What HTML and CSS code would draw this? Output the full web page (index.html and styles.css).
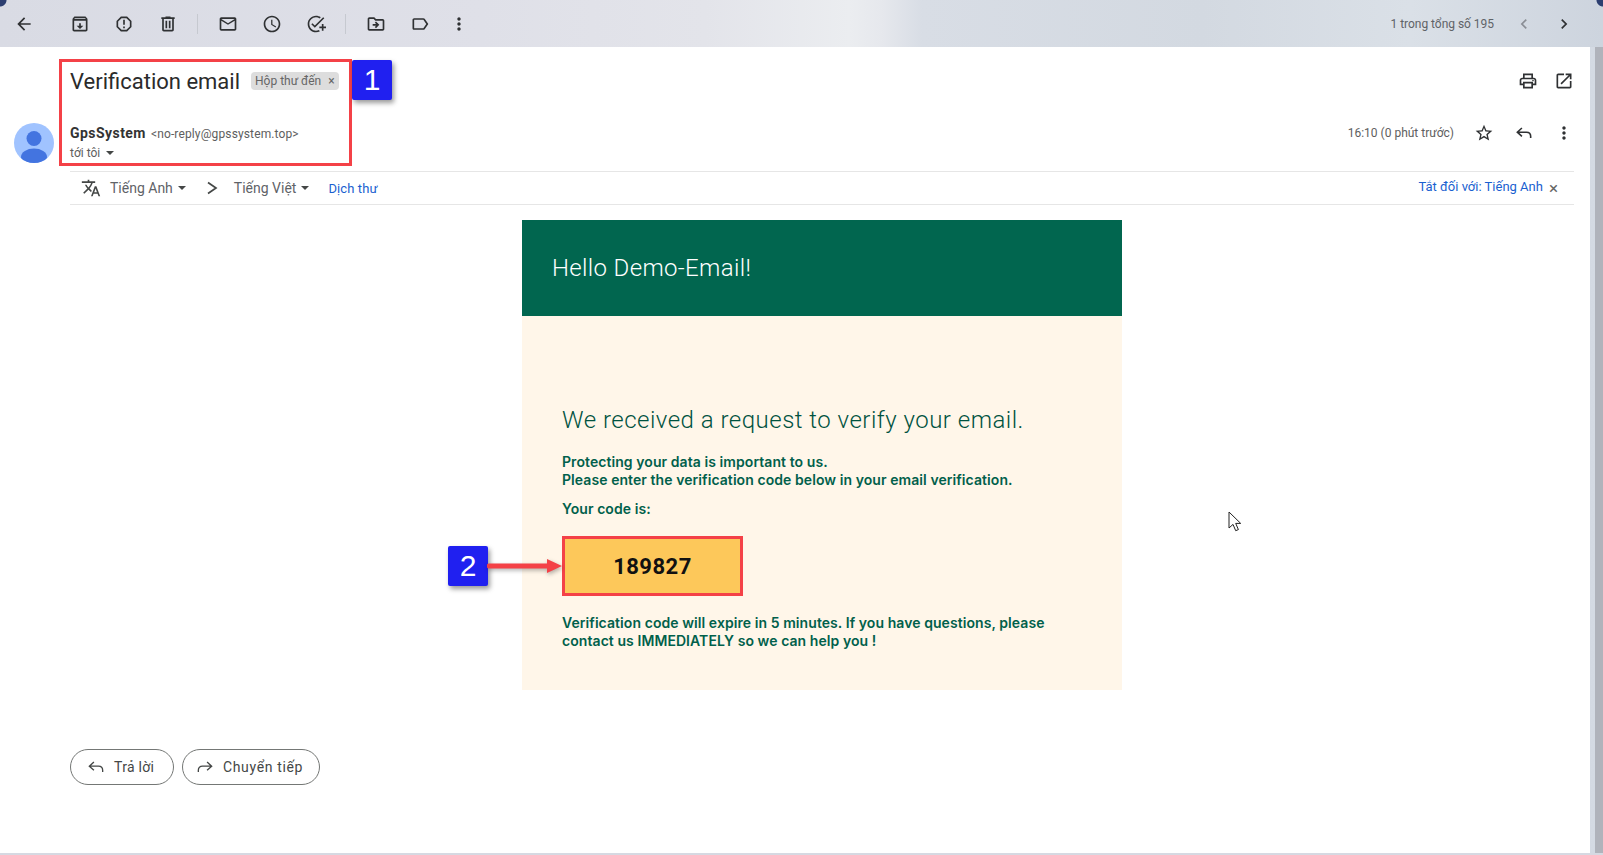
FILE: index.html
```html
<!DOCTYPE html>
<html lang="vi">
<head>
<meta charset="utf-8">
<title>Verification email</title>
<link rel="stylesheet" href="styles.css">
</head>
<body>
<div class="app">
  <header class="toolbar">
    <div class="tools">
      <svg class="ico back" viewBox="0 0 24 24"><path d="M20 11H7.83l5.59-5.59L12 4l-8 8 8 8 1.41-1.41L7.83 13H20v-2z"/></svg>
      <svg class="ico" viewBox="0 0 24 24"><path d="M20.5 5.2l-1.4-1.6c-.3-.4-.7-.6-1.1-.6H6c-.5 0-.9.2-1.2.6L3.5 5.2c-.3.4-.5.8-.5 1.3V19c0 1.1.9 2 2 2h14c1.100 0 2-.9 2-2V6.500c0-.5-.2-.9-.5-1.300zM19 19H5V8h14v11zM6 5h12l1 1H5l1-1z"/><path d="M12 18l-4-4h3v-3h2v3h3z"/></svg>
      <svg class="ico" viewBox="0 0 24 24"><path d="M15.73 3H8.27L3 8.27v7.46L8.27 21h7.46L21 15.73V8.27L15.73 3zM19 14.9L14.9 19H9.1L5 14.9V9.1L9.1 5h5.8L19 9.1v5.8z"/><path d="M11 7h2v6h-2zM11 15h2v2h-2z"/></svg>
      <svg class="ico" viewBox="0 0 24 24"><path d="M15 4V3H9v1H4v2h1v13c0 1.100.9 2 2 2h10c1.100 0 2-.9 2-2V6h1V4h-5zm2 15H7V6h10v13z"/><path d="M9 8h2v9H9zm4 0h2v9h-2z"/></svg>
      <span class="sep"></span>
      <svg class="ico" viewBox="0 0 24 24"><path d="M20 4H4c-1.100 0-2 .9-2 2v12c0 1.100.9 2 2 2h16c1.100 0 2-.9 2-2V6c0-1.100-.9-2-2-2zm0 14H4V8l8 5 8-5v10zm-8-7L4 6h16l-8 5z"/></svg>
      <svg class="ico" viewBox="0 0 24 24"><path d="M11.990 2C6.470 2 2 6.480 2 12s4.470 10 9.990 10C17.520 22 22 17.520 22 12S17.520 2 11.990 2zM12 20c-4.420 0-8-3.580-8-8s3.580-8 8-8 8 3.580 8 8-3.580 8-8 8z"/><path d="M12.500 7H11v6l5.250 3.150.75-1.230-4.500-2.670z"/></svg>
      <svg class="ico" viewBox="0 0 24 24"><path d="M22 5.180L10.590 16.600l-4.240-4.240 1.410-1.410 2.830 2.830 10-10L22 5.180z"/><path d="M12 20c-4.410 0-8-3.590-8-8s3.590-8 8-8c1.570 0 3.040.46 4.280 1.250l1.450-1.450C16.100 2.670 14.130 2 12 2 6.480 2 2 6.480 2 12s4.480 10 10 10c1.730 0 3.360-.44 4.780-1.220l-1.500-1.500c-1 .46-2.110.72-3.280.72z"/><path d="M19 15h-3v2h3v3h2v-3h3v-2h-3v-3h-2v3z"/></svg>
      <span class="sep"></span>
      <svg class="ico" viewBox="0 0 24 24"><path d="M20 6h-8l-2-2H4c-1.100 0-2 .9-2 2v12c0 1.100.9 2 2 2h16c1.100 0 2-.9 2-2V8c0-1.100-.9-2-2-2zm0 12H4V6h5.170l2 2H20v10z"/><path d="M12.160 12H8v2h4.160l-1.590 1.590L12 17l4-4-4-4-1.410 1.410z"/></svg>
      <svg class="ico" viewBox="0 0 24 24"><path d="M17.630 5.840C17.270 5.330 16.670 5 16 5L5 5.010C3.900 5.010 3 5.900 3 7v10c0 1.100.9 1.990 2 1.990L16 19c.67 0 1.270-.33 1.630-.84L22 12l-4.370-6.160zM16 17H5V7h11l3.550 5L16 17z"/></svg>
      <svg class="ico narrow" viewBox="0 0 24 24"><path d="M12 8c1.100 0 2-.9 2-2s-.9-2-2-2-2 .9-2 2 .9 2 2 2zm0 2c-1.100 0-2 .9-2 2s.9 2 2 2 2-.9 2-2-.9-2-2-2zm0 6c-1.100 0-2 .9-2 2s.9 2 2 2 2-.9 2-2-.9-2-2-2z"/></svg>
    </div>
    <div class="pager">
      <span class="count">1 trong tổng số 195</span>
      <svg class="ico dim" viewBox="0 0 24 24"><path d="M15.410 7.410L14 6l-6 6 6 6 1.410-1.410L10.830 12z"/></svg>
      <svg class="ico" viewBox="0 0 24 24"><path d="M10 6L8.590 7.410 13.170 12l-4.580 4.590L10 18l6-6z"/></svg>
    </div>
  </header>

  <div class="main">
    <main class="panel">
      <div class="subject">
        <h1 class="title">Verification email</h1>
        <span class="chip">Hộp thư đến <span class="chip-x">×</span></span>
        <div class="subject-actions">
          <svg class="ico" viewBox="0 0 24 24"><path d="M19 8h-1V3H6v5H5c-1.660 0-3 1.340-3 3v6h4v4h12v-4h4v-6c0-1.660-1.340-3-3-3zM8 5h8v3H8V5zm8 14H8v-4h8v4zm2-4v-2H6v2H4v-4c0-.55.45-1 1-1h14c.55 0 1 .45 1 1v4h-2z"/><circle cx="18" cy="11.500" r="1"/></svg>
          <svg class="ico" viewBox="0 0 24 24"><path d="M19 19H5V5h7V3H5c-1.110 0-2 .9-2 2v14c0 1.100.89 2 2 2h14c1.100 0 2-.9 2-2v-7h-2v7zM14 3v2h3.590l-9.830 9.830 1.410 1.410L19 6.410V10h2V3h-7z"/></svg>
        </div>
      </div>

      <div class="msg-head">
        <svg class="avatar" viewBox="0 0 40 40"><defs><clipPath id="av"><circle cx="20" cy="20" r="20"/></clipPath></defs><circle cx="20" cy="20" r="20" fill="#a0c3ff"/><g clip-path="url(#av)" fill="#4374e0"><circle cx="20" cy="15.500" r="7.500"/><ellipse cx="20" cy="34" rx="13" ry="8.500"/></g></svg>
        <div class="sender">
          <div class="from"><span class="name">GpsSystem</span> <span class="addr">&lt;no-reply@gpssystem.top&gt;</span></div>
          <div class="to">tới tôi <span class="caret small"></span></div>
        </div>
        <div class="msg-actions">
          <span class="time">16:10 (0 phút trước)</span>
          <svg class="ico" viewBox="0 0 24 24"><path d="M22 9.240l-7.190-.62L12 2 9.190 8.630 2 9.240l5.460 4.730L5.820 21 12 17.270 18.180 21l-1.630-7.030L22 9.240zM12 15.400l-3.760 2.270 1-4.280-3.320-2.880 4.380-.38L12 6.100l1.710 4.040 4.380.38-3.320 2.880 1 4.280L12 15.400z"/></svg>
          <svg class="ico stroke" viewBox="0 0 24 24"><path d="M9.500 6L4 11l5.500 5M4.500 11H15c3 0 5 2 5 5v2"/></svg>
          <svg class="ico" viewBox="0 0 24 24"><path d="M12 8c1.100 0 2-.9 2-2s-.9-2-2-2-2 .9-2 2 .9 2 2 2zm0 2c-1.100 0-2 .9-2 2s.9 2 2 2 2-.9 2-2-.9-2-2-2zm0 6c-1.100 0-2 .9-2 2s.9 2 2 2 2-.9 2-2-.9-2-2-2z"/></svg>
        </div>
      </div>

      <div class="content">
        <div class="translate">
          <svg class="ico tr-ico" viewBox="0 0 24 24"><path d="M12.870 15.070l-2.540-2.510.03-.03c1.740-1.940 2.980-4.170 3.710-6.530H17V4h-7V2H8v2H1v1.990h11.170C11.500 7.920 10.440 9.750 9 11.350 8.070 10.320 7.300 9.190 6.690 8h-2c.73 1.630 1.730 3.170 2.980 4.560l-5.090 5.020L4 19l5-5 3.110 3.110.76-2.040zM18.500 10h-2L12 22h2l1.120-3h4.750L21 22h2l-4.500-12zm-2.620 7l1.620-4.330L19.120 17h-3.240z"/></svg>
          <span class="lang">Tiếng Anh</span><span class="caret"></span>
          <svg class="chev" viewBox="0 0 24 24"><path d="M8 6.500l8 5.500-8 5.500"/></svg>
          <span class="lang">Tiếng Việt</span><span class="caret"></span>
          <a class="link doc">Dịch thư</a>
          <a class="link off">Tắt đối với: Tiếng Anh</a>
          <span class="off-x">×</span>
        </div>

        <article class="card">
          <div class="card-head">Hello Demo-Email!</div>
          <div class="card-body">
            <h2 class="lead">We received a request to verify your email.</h2>
            <p class="txt first">Protecting your data is important to us.<br>Please enter the verification code below in your email verification.</p>
            <p class="txt code-label">Your code is:</p>
            <div class="code">189827</div>
            <p class="txt">Verification code will expire in 5 minutes. If you have questions, please contact us IMMEDIATELY so we can help you !</p>
          </div>
        </article>

        <div class="actions">
          <button class="pill pill-reply"><svg class="ico stroke thin" viewBox="0 0 24 24"><path d="M9.500 6L4 11l5.500 5M4.500 11H15c3 0 5 2 5 5v2"/></svg>Trả lời</button>
          <button class="pill pill-forward"><svg class="ico stroke thin" viewBox="0 0 24 24"><path d="M14.500 6L20 11l-5.500 5M19.500 11H9c-3 0-5 2-5 5v2"/></svg>Chuyển tiếp</button>
        </div>
      </div>
    </main>
    <div class="rail"><div class="thumb"></div></div>
  </div>
</div>

<div class="mark mark-box"></div>
<div class="mark badge badge-one">1</div>
<div class="mark badge badge-two">2</div>
<svg class="mark arrow" viewBox="0 0 76 20"><path d="M2 7.500h58V3l15 7-15 7v-4.500H2c-3.300 0-3.300-5 0-5z" fill="#f44147"/></svg>
<svg class="mark cursor" viewBox="0 0 14 22"><path d="M1 1v16l4-3.600 2.700 6.300 2.700-1.100-2.700-6.200h5z" fill="#fff" stroke="#222" stroke-width="1"/></svg>
</body>
</html>
```
FILE: styles.css
```css
* { box-sizing: border-box; }
html, body { margin: 0; height: 100%; overflow: hidden; }
body {
  font-family: Roboto, "Liberation Sans", sans-serif;
  color: #202124;
  background: #d6d9e2;
  position: relative;
}
.app {
  height: 853px;
  display: flex;
  flex-direction: column;
  background: linear-gradient(90deg, #dcdee8 0%, #e0e1e9 40%, #dadfe8 55%, #cfd6e0 62%, #d9dfe8 80%, #d4dae3 100%);
}
.toolbar {
  height: 47px;
  flex: none;
  display: flex;
  align-items: center;
  justify-content: space-between;
  background:
    radial-gradient(circle at 0 0, #2c3e70 6px, transparent 7px),
    radial-gradient(circle at 1603px 0, #2c3e70 6px, transparent 7px),
    linear-gradient(90deg, #d9dbe4 0%, #dfe0e8 30%, #e3e4ea 44%, #ebedf0 53%, #e6e8ed 55%, #d8dde5 57.500%, #d3d9e1 75%, #dae0e7 88%, #cdd4de 100%);
}
.tools { display: flex; align-items: center; padding-left: 12px; }
.ico { width: 20px; height: 20px; fill: #2f3133; flex: none; display: block; }
.ico.stroke { fill: none; stroke: #2f3133; stroke-width: 1.900; }
.ico.stroke.thin { stroke: #444746; stroke-width: 1.600; }
.tools .ico { margin-right: 24px; margin-left: 0; }
.tools .back { margin-left: 2px; margin-right: 36px; width: 20px; }
.sep { width: 1px; height: 20px; background: #c6c9d0; margin: 0 20px 0 -5px; }
.tools .ico.narrow { margin-right: 0; margin-left: -5px; }
.pager { display: flex; align-items: center; padding-right: 29px; }
.count { font-size: 12px; color: #5f6368; margin-right: 20px; letter-spacing: -.03px; }
.pager .ico + .ico { margin-left: 20px; }
.ico.dim { fill: #8a8e95; }

.main { flex: 1; display: flex; min-height: 0; }
.panel { width: 1590px; flex: none; background: #fff; }
.rail { flex: 1; display: flex; justify-content: flex-end; }
.thumb { width: 8px; height: 100%; background: #b0b3bb; }

.subject {
  height: 68px;
  display: flex;
  align-items: center;
  padding: 0 16px 0 70px;
}
.title { font-size: 22px; font-weight: 400; margin: 0; color: #2b2b2b; }
.chip {
  margin-left: 11px;
  height: 18px;
  padding: 0 4px;
  background: #dddddd;
  border-radius: 4px;
  font-size: 12px;
  line-height: 18px;
  color: #666;
}
.chip-x { margin-left: 4px; }
.subject-actions { margin-left: auto; display: flex; gap: 16px; }

.msg-head {
  margin-top: 8px;
  height: 48px;
  display: flex;
  padding: 0 16px 0 14px;
  align-items: flex-start;
}
.avatar { width: 40px; height: 40px; flex: none; margin-right: 16px; }
.sender { padding-top: 2px; }
.from { line-height: 17px; display: flex; align-items: baseline; gap: 5px; }
.name { font-size: 14px; font-weight: 700; color: #333; letter-spacing: .45px; }
.addr { font-size: 12px; color: #5e5e5e; letter-spacing: .13px; }
.to { font-size: 12px; color: #5e5e5e; line-height: 18px; margin-top: 1px; display: flex; align-items: center; gap: 6px; }
.msg-actions { margin-left: auto; display: flex; align-items: center; height: 20px; }
.msg-actions .ico + .ico { margin-left: 20px; }
.time { font-size: 12px; color: #5e5e5e; margin-right: 20px; }

.caret { width: 0; height: 0; border: 4.500px solid transparent; border-top-color: #444746; border-bottom: 0; flex: none; margin-left: 5px; }
.caret.small { margin-left: 0; }

.content { padding: 0 16px 0 70px; }
.translate {
  height: 34px;
  display: flex;
  align-items: center;
  border-top: 1px solid #e6e6e6;
  border-bottom: 1px solid #e6e6e6;
  padding-left: 11px;
  font-size: 14px;
  color: #5f6368;
}
.tr-ico { margin-right: 9px; fill: #444746; }
.chev { margin: 0 10px 0 14px; fill: none; stroke: #444746; stroke-width: 1.700; width: 24px; height: 24px; flex: none; }
.doc { margin-left: 19px; letter-spacing: .1px; }
.link { color: #1a5fd0; font-size: 13px; }
.off { margin-left: auto; margin-right: 6px; margin-top: -3px; }
.off-x { font-size: 17px; color: #666; margin-right: 16px; line-height: 1; }

.card { width: 600px; margin: 15px auto 0; }
.card-head {
  height: 96px;
  background: #01664f;
  color: #fff;
  font-size: 24px;
  font-weight: 300;
  letter-spacing: .35px;
  padding-left: 30px;
  display: flex;
  align-items: center;
}
.card-body {
  height: 374px;
  background: #fff6e9;
  padding: 90px 40px 0;
  color: #01604b;
}
.lead { font-size: 24px; font-weight: 300; line-height: 28px; margin: 0 0 19px; letter-spacing: .49px; color: #00523f; }
.txt { font-family: Inter, Roboto, sans-serif; font-size: 14px; font-weight: 600; line-height: 18px; margin: 0; letter-spacing: .07px; }
.code-label { margin-top: 11px; }
.code {
  width: 181px;
  height: 60px;
  margin: 18px 0;
  background: #fdc85a;
  border: 3px solid #f44147;
  color: #111;
  font-size: 22px;
  font-weight: 700;
  letter-spacing: .5px;
  display: flex;
  align-items: center;
  justify-content: center;
}

.actions { display: flex; gap: 8px; margin-top: 59px; }
.pill {
  height: 36px;
  padding: 0 0 0 15px;
  border: 1px solid #747775;
  border-radius: 18px;
  background: #fff;
  font: 400 14px Roboto, sans-serif;
  color: #444746;
  display: flex;
  align-items: center;
  gap: 8px;
}
.pill-reply { width: 104px; letter-spacing: .3px; }
.pill-forward { width: 138px; padding-left: 12px; letter-spacing: .65px; }

.mark { position: absolute; }
.mark-box { left: 59px; top: 59px; width: 293px; height: 107px; border: 3px solid #f44147; }
.badge {
  width: 40px;
  height: 40px;
  background: #2020f0;
  color: #fff;
  font: 400 30px/40px "Liberation Sans", sans-serif;
  text-align: center;
  border-radius: 2px;
  box-shadow: 2px 3px 5px rgba(0,0,0,.4);
}
.badge-one { left: 352px; top: 60px; }
.badge-two { left: 448px; top: 546px; }
.arrow { left: 487px; top: 556px; width: 76px; height: 20px; filter: drop-shadow(1px 2px 2px rgba(0,0,0,.3)); }
.cursor { left: 1228px; top: 511px; width: 14px; height: 22px; }
```
